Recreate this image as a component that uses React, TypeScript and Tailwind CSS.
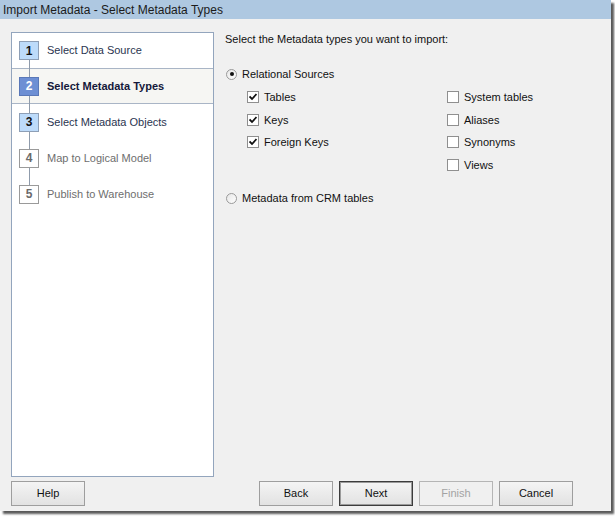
import React from 'react';

const steps = [
  { n: 1, label: 'Select Data Source', state: 'done' },
  { n: 2, label: 'Select Metadata Types', state: 'active' },
  { n: 3, label: 'Select Metadata Objects', state: 'done' },
  { n: 4, label: 'Map to Logical Model', state: 'todo' },
  { n: 5, label: 'Publish to Warehouse', state: 'todo' },
];

const Radio: React.FC<{ checked?: boolean; label: string }> = ({ checked, label }) => (
  <div className="flex items-center h-[14px]">
    <span className="ml-[1px] w-[11px] h-[11px] rounded-full border border-[#9a9a9a] bg-gradient-to-br from-[#e6e6e6] to-white flex items-center justify-center">
      {checked && <span className="w-[4px] h-[4px] rounded-full bg-[#111]" />}
    </span>
    <span className="ml-[5px]">{label}</span>
  </div>
);

const Check: React.FC<{ checked?: boolean; label: string }> = ({ checked, label }) => (
  <div className="flex items-center h-[22.5px]">
    <span className="w-[12px] h-[12px] border border-[#8f8f8f] bg-white flex items-center justify-center">
      {checked && (
        <svg width="8" height="8" viewBox="0 0 8 8">
          <path d="M0.5 3.5 L3 6 L7.5 1" stroke="#111" strokeWidth="1.8" fill="none" />
        </svg>
      )}
    </span>
    <span className="ml-[5px]">{label}</span>
  </div>
);

const Btn: React.FC<{ label: string; primary?: boolean; disabled?: boolean }> = ({ label, primary, disabled }) => (
  <button
    className={
      primary
        ? 'w-[74px] h-[25px] border border-[#3c3c3c] bg-gradient-to-b from-[#f4f4f4] to-[#e2e2e2] shadow-[inset_0_0_0_1px_#9a9a9a] text-[11px] text-[#111]'
        : disabled
        ? 'w-[74px] h-[25px] border border-[#b5b5b5] bg-[#f0f0f0] text-[11px] text-[#a3a3a3]'
        : 'w-[74px] h-[25px] border border-[#9e9e9e] bg-gradient-to-b from-[#f4f4f4] to-[#e2e2e2] text-[11px] text-[#111]'
    }
  >
    {label}
  </button>
);

export default function App() {
  return (
    <div className="w-[615px] h-[517px] bg-white" style={{ fontFamily: '"Liberation Sans", Arial, sans-serif' }}>
      <div className="w-[611px] h-[511px] bg-[#f0f0f0] flex flex-col shadow-[3px_3px_2px_rgba(0,0,0,0.65)]">
        {/* Title bar */}
        <div className="h-[19px] bg-[#aec8e1] flex items-center pl-[3px] text-[12px] text-[#1b1b1b]">
          Import Metadata - Select Metadata Types
        </div>

        <div className="flex pl-[11px] pt-[13px]">
          {/* Steps panel */}
          <div className="relative w-[203px] h-[445px] bg-white border border-[#93a5bd]">
            <div className="absolute left-[17px] top-[25px] h-[138px] w-px bg-[#8f9bab] z-10" />
            {steps.map((s, i) => (
              <div
                key={s.n}
                className={
                  'flex items-center pl-[7px] ' +
                  (i === 0 ? 'h-[36px] border-b border-[#a9b5c6]' : i === 1 ? 'h-[35px] bg-[#f6f6f3] border-b border-[#a9b5c6]' : 'h-[36px]')
                }
              >
                <span
                  className={
                    'relative z-20 w-[20px] h-[19px] flex items-center justify-center text-[12px] font-bold border ' +
                    (s.state === 'active'
                      ? 'bg-[#6d8fd4] border-[#5a78b8] text-white'
                      : s.state === 'done'
                      ? 'bg-[#bddbfa] border-[#8e9fb6] text-[#111]'
                      : 'bg-white border-[#9a9a9a] text-[#6a6a6a]')
                  }
                >
                  {s.n}
                </span>
                <span
                  className={
                    'ml-[8px] text-[11px] ' +
                    (s.state === 'active'
                      ? 'font-bold text-[#14183a]'
                      : s.state === 'done'
                      ? 'text-[#2a3550]'
                      : 'text-[#6e6e6e]')
                  }
                >
                  {s.label}
                </span>
              </div>
            ))}
          </div>

          {/* Options */}
          <div className="ml-[11px] flex-1 text-[11px] text-[#111]">
            <div className="h-[14px] flex items-center">Select the Metadata types you want to import:</div>
            <div className="mt-[21px]">
              <Radio checked label="Relational Sources" />
            </div>
            <div className="mt-[5px] grid grid-cols-[200px_1fr] pl-[22px]">
              <div>
                <Check checked label="Tables" />
                <Check checked label="Keys" />
                <Check checked label="Foreign Keys" />
              </div>
              <div>
                <Check label="System tables" />
                <Check label="Aliases" />
                <Check label="Synonyms" />
                <Check label="Views" />
              </div>
            </div>
            <div className="mt-[15px]">
              <Radio label="Metadata from CRM tables" />
            </div>
          </div>
        </div>

        {/* Buttons */}
        <div className="flex items-center pl-[11px] mt-[4px]">
          <Btn label="Help" />
          <div className="ml-[174px] flex gap-[6px]">
            <Btn label="Back" />
            <Btn label="Next" primary />
            <Btn label="Finish" disabled />
            <Btn label="Cancel" />
          </div>
        </div>
      </div>
    </div>
  );
}
